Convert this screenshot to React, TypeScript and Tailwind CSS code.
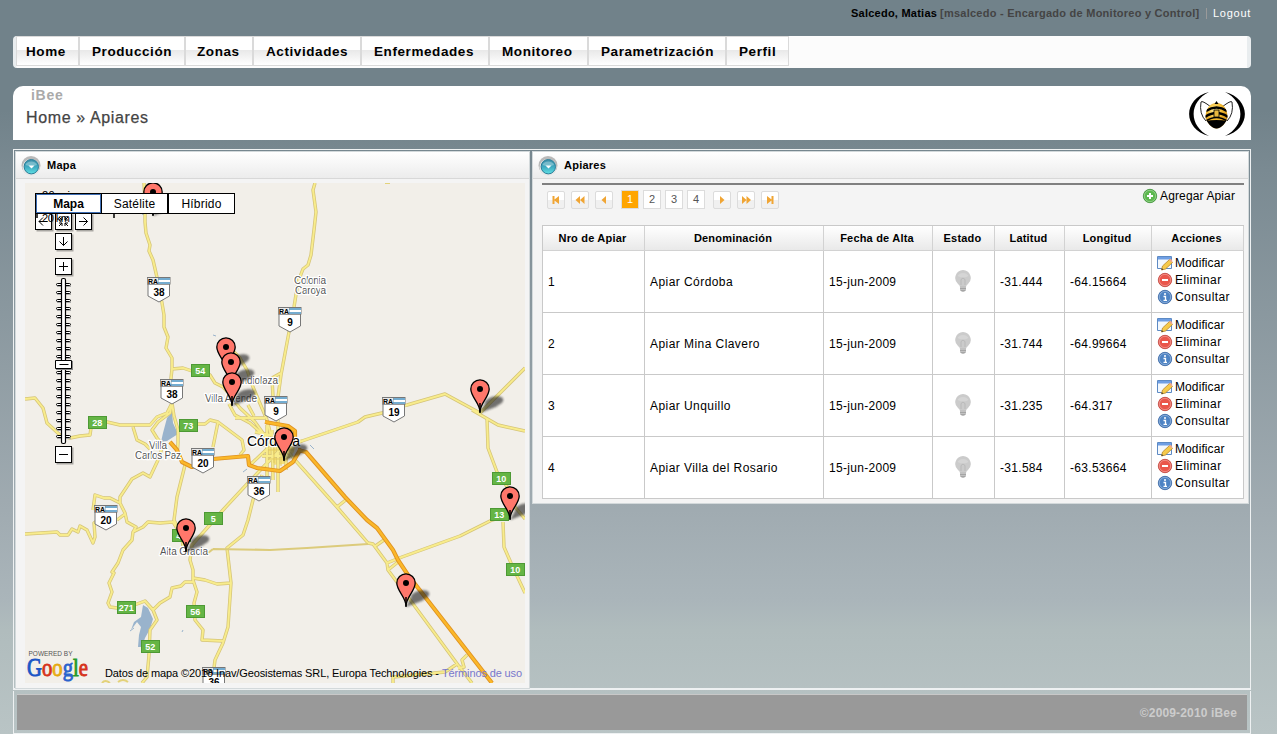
import React from "react";

const NAV: [string, string][] = [
  ["Home", "w-[63px] pl-[9px]"],
  ["Producción", "w-[106px] pl-[12px]"],
  ["Zonas", "w-[68px] pl-[11px]"],
  ["Actividades", "w-[108px] pl-[12px]"],
  ["Enfermedades", "w-[128px] pl-[12px]"],
  ["Monitoreo", "w-[99px] pl-[12px]"],
  ["Parametrización", "w-[138px] pl-[12px]"],
  ["Perfil", "w-[63px] pl-[12px]"],
];

const ROWS = [
  ["1", "Apiar Córdoba", "15-jun-2009", "-31.444", "-64.15664"],
  ["2", "Apiar Mina Clavero", "15-jun-2009", "-31.744", "-64.99664"],
  ["3", "Apiar Unquillo", "15-jun-2009", "-31.235", "-64.317"],
  ["4", "Apiar Villa del Rosario", "15-jun-2009", "-31.584", "-63.53664"],
];

const HEADERS = ["Nro de Apiar", "Denominación", "Fecha de Alta", "Estado", "Latitud", "Longitud", "Acciones"];

const ROADS = [
  "M144 183L145 205L145 222L146 233L150 245L149 251L153 260L156 273L159 287L162 303L164 315L164 327L168 337L166 348L172 358L172 369L171 378L172 403L170 413L158 422L152 430L157 438L163 445L158 460L150 477L143 473L132 479L120 497L120 503",
  "M172 369L183 368L192 371L210 375L215 383L223 387L230 395L240 408L255 422L268 440",
  "M232 350L240 358L247 370L253 387L267 420L272 440",
  "M315 183L313 190L316 212L314 230L311 255L308 265L303 269L298 282L294 307L289 332L281 375L278 397L276 420",
  "M281 373L272 378L273 397",
  "M295 443L302 441L358 422L365 417L382 413L407 405L445 394L480 413L525 368",
  "M472 410L498 425L525 431",
  "M487 418L488 448L497 472L508 488L515 507L525 519",
  "M510 515L492 520L460 536L402 557L387 563",
  "M503 522L504 547L511 563L525 593",
  "M285 448L295 460L337 507L368 543L373 544L387 563L388 570L408 597L458 665L472 683",
  "M337 507L347 499M374 547L384 540M388 570L398 562",
  "M457 664L445 672L393 677L393 683M467 655L462 660L464 667L458 668",
  "M280 450L270 460L248 483L223 510L192 545L190 560L193 570L193 580L197 592L194 603L195 620L203 630L202 640L223 641",
  "M262 475L253 500L248 520L243 535L227 548L231 583L228 627L223 643L215 660L214 668",
  "M193 578L205 580L217 584L231 583",
  "M193 582L185 582L181 586L172 588L170 597L160 603L153 610L157 620L150 630L149 655L147 677L142 683",
  "M153 610L145 601L137 604L126 608L117 608L110 607L108 603L112 592L109 583L114 573L112 572L118 563L123 550L132 540L133 532L143 527L148 522L160 523L173 522L182 537L183 548",
  "M93 510L95 495L104 498L110 498L120 503L125 513L127 522L136 527L133 532M125 514L117 520",
  "M25 534L57 532L60 535L68 535L72 529L78 532L80 526L87 530L93 543L95 537L94 523L104 515",
  "M185 465L177 497L174 520L180 532",
  "M25 399L35 398L43 408L47 423L60 435L70 438L80 436L90 435L91 428M97 424L107 422L120 425L150 425L157 417L167 413L172 403",
  "M133 427L137 440L145 444L150 449",
  "M172 403L174 416L178 430L178 443L177 458M188 426L198 424L205 424L210 420L218 422L242 440L244 450L240 455M218 422L213 447",
  "M229 404L235 415L250 423L267 438M235 418L265 418M248 405L254 416M250 465L268 448",
  "M267 425L267 490M272 430L273 480M278 420L278 492M286 425L286 470M255 432L295 440M258 445L295 445M262 456L290 456",
];

const HIGHWAYS = [
  "M170 442L177 450L182 462L192 467L213 459L248 456L249 465L257 468L280 471L293 462L300 450L298 450",
  "M265 422L288 426L295 431L295 442",
  "M298 450L306 452L345 497L367 520L377 528L393 550L398 560L408 575L492 683",
];

const SHIELDS: [number, number, string][] = [
  [147, 277, "38"], [160, 379, "38"], [278, 307, "9"], [264, 396, "9"], [382, 397, "19"],
  [191, 448, "20"], [247, 476, "36"], [94, 505, "20"], [202, 667, "36"],
];

const SIGNS: [number, number, string][] = [
  [200, 371, "54"], [97, 423, "28"], [188, 426, "73"], [213, 519, "5"], [181, 536, "45"], [126, 608, "271"],
  [195, 612, "56"], [150, 647, "52"], [501, 479, "10"], [499, 515, "13"], [515, 570, "10"],
];

const PINS: [number, number][] = [
  [153, 192], [226, 347], [231, 362], [232, 382], [480, 389], [284, 437], [186, 528], [510, 496], [406, 583],
];

function Label({ x, y, w, size = 10, fill = "#555", children }: { x: number; y: number; w: number; size?: number; fill?: string; children: string }) {
  return (
    <text x={x} y={y} textLength={w} fontSize={size} fill={fill} stroke="#fff" strokeWidth="2.5" strokeLinejoin="round" paintOrder="stroke">
      {children}
    </text>
  );
}

function MapButton({ x, y, d }: { x: number; y: number; d: string }) {
  return (
    <g transform={`translate(${x} ${y})`}>
      <rect x="1.5" y="1.5" width="17" height="17" fill="#000" opacity=".3" />
      <rect x=".5" y=".5" width="16" height="16" fill="#fff" stroke="#000" />
      <path d={d} fill="none" stroke="#000" />
    </g>
  );
}

function MapDrawing() {
  const roads = ROADS.join("");
  const highways = HIGHWAYS.join("");
  return (
    <svg viewBox="25 183 500 500" className="block h-[500px] w-[500px]" fontFamily="Liberation Sans, Arial, sans-serif">
      <defs>
        <filter id="soft" x="-30%" y="-30%" width="160%" height="160%"><feGaussianBlur stdDeviation="1.3" /></filter>
      </defs>
      <rect x="25" y="183" width="500" height="500" fill="#f2efe9" />
      <path d="M167 418L172 412L173 423L178 434L167 441L161 442L163 433Z" fill="#99b3cc" />
      <path d="M143 605L148 608L153 619L150 629L145 638L142 647L138 647L139 635L141 627L137 622L131 630L134 622L141 617Z" fill="#99b3cc" />
      <path d="M213 335l3 1M130 631l4-3M182 632l1-2M243 472l4-3M310 445l4 4M142 214l3 1" stroke="#99b3cc" fill="none" />
      <path d="M271 438L284 441L296 440L294 452L284 464L272 465L266 452Z" fill="#f6e27b" />
      <path d={roads} fill="none" stroke="#d5c478" strokeWidth="3.4" strokeLinejoin="round" />
      <path d={roads} fill="none" stroke="#f8ec8c" strokeWidth="1.9" strokeLinejoin="round" />
      <path d="M213 549L208 553M213 549L270 550L307 548L368 544" fill="none" stroke="#dccb7b" strokeWidth="2.2" />
      <path d="M274 441V463M281 441V466M289 441V458M268 450H294M268 459H288" stroke="#e4cb61" fill="none" />
      <path d={highways} fill="none" stroke="#df9222" strokeWidth="4.2" strokeLinejoin="round" />
      <path d={highways} fill="none" stroke="#fbb829" strokeWidth="2.4" strokeLinejoin="round" />
      <path d="M102 683q3-4 8 0M118 682q5-4 10 0M385 183h5" fill="none" stroke="#e3d27a" strokeWidth="2" />

      <Label x={294} y={284} w={32}>Colonia</Label>
      <Label x={295} y={294} w={31}>Caroya</Label>
      <Label x={228} y={384} w={50}>Mendiolaza</Label>
      <Label x={205} y={402} w={52}>Villa Allende</Label>
      <Label x={149} y={449} w={18}>Villa</Label>
      <Label x={135} y={459} w={46}>Carlos Paz</Label>
      <Label x={160} y={555} w={48}>Alta Gracia</Label>
      <Label x={247} y={446} w={53} size={14} fill="#000">Córdoba</Label>

      {SHIELDS.map(([x, y, n], i) => (
        <g key={i} transform={`translate(${x} ${y})`}>
          <path d="M1 7H22.5V19L12 25L1 19Z" fill="#fff" stroke="#777" />
          <rect x="0" y="0" width="23.5" height="7.5" fill="#777" />
          <rect x=".8" y="1" width="10.4" height="6" fill="#e8e8e8" />
          <rect x="11.5" y="1" width="11.5" height="6" fill="#74acd0" />
          <rect x="11.5" y="3" width="11.5" height="2" fill="#fff" />
          <text x="1" y="6.6" fontSize="7" fontWeight="bold" textLength="10" lengthAdjust="spacingAndGlyphs">RA</text>
          <text x="12" y="18.6" fontSize="10" fontWeight="bold" textAnchor="middle">{n}</text>
        </g>
      ))}
      {SIGNS.map(([x, y, n], i) => (
        <g key={i}>
          <rect x={x - 8.5} y={y - 6.5} width="18" height="12" fill="#65b545" stroke="#4d9934" />
          <text x={x + 0.3} y={y + 3} fontSize="9" fontWeight="bold" fill="#fff" textAnchor="middle">{n}</text>
        </g>
      ))}
      {PINS.map(([x, y], i) => (
        <g key={i} transform={`translate(${x} ${y + 24})`} fill="#222" opacity=".62" filter="url(#soft)">
          <path d="M0 0L6 -11L18 -7Z" />
          <ellipse cx="14" cy="-11.500" rx="9.500" ry="4.800" transform="rotate(-14 14 -11.5)" />
        </g>
      ))}
      {PINS.map(([x, y], i) => (
        <g key={i} transform={`translate(${x} ${y})`}>
          <path d="M0 23C0 14 -9.2 8 -9.2 0A9.2 9.2 0 1 1 9.2 0C9.2 8 0 14 0 23Z" fill="#ff776b" stroke="#000" strokeWidth="1.3" />
          <path d="M0 14V24" stroke="#000" strokeWidth="1.5" />
          <circle r="3" fill="#000" />
        </g>
      ))}

      <text x="42" y="199" fontSize="11" textLength="28">20 mi</text>
      <MapButton x={35} y={213} d="M12.5 8.500H4M8 4.500L4 8.500L8 12.500" />
      <MapButton x={55} y={213} d="M4 4l3 3m0-3v3h-3M13 4l-3 3m0-3v3h3M4 13l3-3m0 3v-3h-3M13 13l-3-3m0 3v-3h3" />
      <MapButton x={75} y={213} d="M4 8.500H12.500M8.500 4.500L12.500 8.500L8.500 12.500" />
      <MapButton x={55} y={233} d="M8.500 4V12.500M4.500 8.500L8.500 12.500L12.500 8.500" />
      <MapButton x={55} y={258} d="M4 8.500H13M8.500 4V13" />
      <MapButton x={55} y={446} d="M4 8.500H13" />
      <text x="42" y="222" fontSize="11" textLength="28">20 km</text>
      <path d="M37 212v6M114 212v6" stroke="#000" strokeWidth="1.5" />
      {Array.from({ length: 20 }, (_, i) => (
        <g key={i}>
          <path d={`M57 ${286.5 + i * 8}h14`} stroke="#aaa" />
          <rect x="56.500" y={283.5 + i * 8} width="14" height="2" rx="1" fill="#fff" stroke="#000" />
        </g>
      ))}
      <rect x="61.500" y="278.500" width="4" height="165" rx="1.500" fill="#fff" stroke="#000" strokeWidth="1.200" />
      <rect x="56" y="361" width="17" height="9" fill="#888" />
      <path d="M55.500 360.500h16v8h-16zM59.500 364.500h9" fill="#fff" stroke="#000" />

      <text x="28.500" y="656" fontSize="7" fill="#555" textLength="44" lengthAdjust="spacingAndGlyphs">POWERED BY</text>
      <g fontFamily="Liberation Serif, serif" fontSize="25" strokeWidth=".9">
        <text x="27" y="676" textLength="61" lengthAdjust="spacingAndGlyphs">
          <tspan fill="#1c56c6" stroke="#1c56c6">G</tspan><tspan fill="#d6331c" stroke="#d6331c">o</tspan><tspan fill="#f0b51b" stroke="#e3a60c">o</tspan><tspan fill="#2a62cd" stroke="#2a62cd">g</tspan><tspan fill="#269a2a" stroke="#269a2a">l</tspan><tspan fill="#d6331c" stroke="#d6331c">e</tspan>
        </text>
      </g>
      <text x="105" y="677" fontSize="11" textLength="334">Datos de mapa ©2010 Inav/Geosistemas SRL, Europa Technologies -</text>
      <text x="442" y="677" fontSize="11" fill="#7777cc" textLength="80">Términos de uso</text>
    </svg>
  );
}

function MapPanelTabs() {
  return (
    <div className="absolute top-[10px] left-[10px] flex h-[21px] w-[200px] border border-black bg-white text-center text-[12px] leading-[20px]">
      <div className="w-[65px] border border-[#3f6fb5] leading-[18px] font-bold">Mapa</div>
      <div className="w-[68px] border-r-2 border-l border-black tracking-[0.2px]">Satélite</div>
      <div className="w-[65px] tracking-[0.2px]">Híbrido</div>
    </div>
  );
}

function PanelHeader({ title }: { title: string }) {
  return (
    <div className="flex h-[27px] shrink-0 items-center border-b border-[#d8d8d8] bg-linear-to-b from-white to-[#ececec] pl-[5px] text-[11px] font-bold tracking-[0.25px]">
      <svg viewBox="0 0 20 20" className="mt-[2px] mr-[6px] h-5 w-5">
        <defs>
          <linearGradient id="aqua" x1="0" y1="0" x2="0" y2="1">
            <stop offset="0" stopColor="#3d8fa8" />
            <stop offset=".5" stopColor="#3fa9c0" />
            <stop offset="1" stopColor="#5fe0e4" />
          </linearGradient>
        </defs>
        <circle cx="10" cy="9.500" r="9.500" fill="#b9b9b9" />
        <circle cx="10" cy="11.500" r="8.500" fill="#e8e8e8" />
        <circle cx="10.300" cy="10.700" r="7.200" fill="url(#aqua)" stroke="#2a7d98" />
        <path d="M4.500 9a6 5 0 0 1 11.500 0q-6 2-11.500 0" fill="#fff" opacity=".3" />
        <path d="M7.500 9.500h6L10.500 12.500z" fill="#fff" />
      </svg>
      <span>{title}</span>
    </div>
  );
}

const ARROWS: Record<string, string> = {
  first: "M5.500 5h2v3.500l4.500-3.500v8l-4.500-3.500v3.500h-2z",
  rewind: "M9 5v8L4.500 9zM13.500 5v8L9 9z",
  prev: "M11 5v8L6.500 9z",
  next: "M7 5v8l4.500-4z",
  forward: "M5 5v8l4.500-4zM9.500 5v8l4.500-4z",
  last: "M12.500 5h-2v3.500L6 5v8l4.500-3.500v3.500h2z",
};

function PagerArrow({ kind }: { kind: string }) {
  return (
    <div className="h-[18px] w-[18px] rounded-[2px] border border-[#dcdcdc] bg-linear-to-b from-white from-50% to-[#f0f0f0] to-50%">
      <svg viewBox="1 1 16 16" className="block h-4 w-4">
        <path d={ARROWS[kind]} fill="#f0a534" />
      </svg>
    </div>
  );
}

function PagerNumber({ n, active }: { n: string; active?: boolean }) {
  return (
    <div className={`h-[19px] w-[18px] border border-[#dcdcdc] text-center text-[11px] leading-[17px] ${active ? "bg-[#ffa500] text-white" : "bg-white text-[#555]"}`}>
      {n}
    </div>
  );
}

function Bulb() {
  return (
    <svg viewBox="0 0 16 22" className="mr-[2px] mb-[2px] h-[22px] w-4">
      <path d="M8 0a8 8 0 0 0-5 14q2 1.500 2 3h6q0-1.500 2-3a8 8 0 0 0-5-14" fill="#cbcbcb" />
      <path d="M6 15V9.500q2-3 4 0V15" fill="none" stroke="#b9b9b9" />
      <path d="M2.500 6a6 5 0 0 1 11 0q-5 3-11 0" fill="#fff" opacity=".2" />
      <path d="M5 16h6v4l-2 2H7l-2-2z" fill="#c2c2c2" />
      <path d="M5 18.500h6M5.500 20.500h5" stroke="#989898" strokeWidth=".7" />
    </svg>
  );
}

function EditIcon() {
  return (
    <svg viewBox="0 0 16 16" className="h-4 w-4">
      <path d="M.5 1.500h14v12H.5z" fill="#f3f8fd" stroke="#5d8ac4" />
      <path d="M1 2h13v2.500H1z" fill="#6f9fe4" />
      <path d="M4.500 15l1-4 7-6.500 3 3-7 6.500z" fill="#f6ca4a" stroke="#b8852a" strokeWidth=".8" />
      <path d="M12 5l1-1q2-.5 2.500 2.500l-1 1z" fill="#eda78c" />
      <path d="M4.500 15l.4-1.800 1.500 1.300z" fill="#333" />
    </svg>
  );
}

function RoundIcon({ kind }: { kind: "add" | "remove" | "info" }) {
  const fill = kind === "add" ? "#5cb84e" : kind === "remove" ? "#ea564b" : "#4d83c4";
  const edge = kind === "add" ? "#3b8f35" : kind === "remove" ? "#bd3d36" : "#315f9f";
  return (
    <svg viewBox="0 0 16 16" className="h-4 w-4">
      <circle cx="8" cy="8" r="6.700" fill={fill} stroke={edge} strokeWidth=".8" />
      <circle cx="8" cy="8" r="5.700" fill="none" stroke="#fff" opacity=".4" strokeWidth=".8" />
      {kind === "add" && <path d="M8 5v6M5 8h6" stroke="#fff" strokeWidth="2" />}
      {kind === "remove" && <path d="M5 8h6" stroke="#fff" strokeWidth="2" />}
      {kind === "info" && <path d="M7 5h2M6.500 7.500h2v3.500M6.500 11.300h3.500" fill="none" stroke="#fff" strokeWidth="1.300" />}
    </svg>
  );
}

function BeeLogo() {
  return (
    <svg viewBox="0 0 56 44" className="h-11 w-14">
      <defs>
        <radialGradient id="bee" cx=".4" cy=".3" r=".7">
          <stop offset="0" stopColor="#fff0a0" />
          <stop offset=".45" stopColor="#f2b92f" />
          <stop offset="1" stopColor="#b9780c" />
        </radialGradient>
        <clipPath id="beeBody"><path d="M27.500 11C20 11 16.500 18 16.500 25C17 30 23 36.500 27.500 36.500C32 36.500 38 30 38.500 25C38.500 18 35 11 27.500 11Z" /></clipPath>
      </defs>
      <path d="M20 0C-6.500 7 -6.500 37 20 44C-.5 34 -.5 10 20 0ZM36 0C56.500 10 56.500 34 36 44C62.500 37 62.500 7 36 0Z" fill="#000" />
      <path d="M22 15Q13 8 12 10Q10 22 17 29M33 15Q42 8 43 10Q45 22 38 29" fill="none" stroke="#222" strokeWidth="1" />
      <g clipPath="url(#beeBody)">
        <rect x="16" y="10" width="24" height="28" fill="url(#bee)" />
        <path d="M17 19Q27.500 12 38 19M16 25Q27.500 17 39 25" fill="none" stroke="#000" strokeWidth="2.400" />
        <path d="M16 29.500Q27.500 21.500 39 29.500" fill="none" stroke="#000" strokeWidth="1.600" />
        <path d="M16 29Q27.500 27 39 29V38H16Z" fill="#000" />
        <path d="M25 18h5v7h-5z" fill="#e9b83e" stroke="#000" strokeWidth=".8" />
      </g>
      <path d="M25.500 12l2-3 2 3z" fill="#000" />
    </svg>
  );
}

const CELL = "flex items-center border-r border-b border-[#c9c9c9] pl-[5px]";

export default function App() {
  return (
    <div className="h-[734px] w-[1277px] overflow-hidden bg-[linear-gradient(to_bottom,#71828a_0px,#71828a_110px,#7a8a92_170px,#a0abb1_510px,#aab5ba_600px,#b0bcbd_630px,#b9c4c5_734px)] pl-[13px] font-['Liberation_Sans',Arial,sans-serif] text-[12px] text-black">
      <div className="w-[1238px]">
        <div className="flex h-9 justify-end pt-[5px] text-[11px] leading-[16px]">
          <span className="w-[89px] font-bold tracking-[0.24px] whitespace-nowrap">Salcedo, Matias</span>
          <span className="w-[266px] font-bold tracking-[0.25px] whitespace-nowrap text-[#444]">[msalcedo - Encargado de Monitoreo y Control]</span>
          <span className="mt-[3px] mr-[6px] h-[11px] w-px bg-[#9a9a9a]" />
          <span className="w-[38px] tracking-[0.75px] whitespace-nowrap text-white">Logout</span>
        </div>

        <nav className="flex h-8 rounded-[4px] border-r-[4px] border-l-[3px] border-[#e9edef] bg-[#fcfcfc] text-[13.5px] font-bold tracking-[0.58px]">
          {NAV.map(([name, cls]) => (
            <div key={name} className={`${cls} h-[30px] shrink-0 border border-[#dadada] bg-linear-to-b from-white from-48% via-[#e9e9e9] via-48% to-white leading-[29px] whitespace-nowrap`}>
              {name}
            </div>
          ))}
        </nav>

        <header className="mt-[18px] flex h-[54px] justify-between rounded-t-[10px] bg-white pr-[6px]">
          <div className="pl-[13px]">
            <div className="pt-px pl-[5px] text-[14px] leading-[17px] font-bold tracking-[0.7px] text-[#aaa]">iBee</div>
            <div className="text-[16px] leading-[27px] tracking-[0.62px] text-[#444] [-webkit-text-stroke:0.25px_#444]">Home » Apiares</div>
          </div>
          <div className="pt-[6px]"><BeeLogo /></div>
        </header>

        <main className="mt-[9px] flex h-[541px] items-start gap-[2px] border border-b-2 border-[#eef1f2] pt-px pl-px">
          <section className="h-[538px] w-[515px] border border-[#d3d9db] bg-[#f4f4f4]">
            <PanelHeader title="Mapa" />
            <div className="relative mt-[4px] ml-[9px] h-[500px] w-[500px]">
              <MapDrawing />
              <MapPanelTabs />
            </div>
          </section>
          <section className="h-[353px] w-[717px] border border-[#d3d9db] bg-[#f4f4f4]">
            <PanelHeader title="Apiares" />
            <div className="mt-[4px] ml-[9px] w-[702px]">
              <div className="h-[2px] bg-[#808080]" />
              <div className="flex h-[40px] pt-[5px] pl-[5px]">
                <div className="flex gap-[6px] pt-px">
                  <PagerArrow kind="first" />
                  <PagerArrow kind="rewind" />
                  <PagerArrow kind="prev" />
                </div>
                <div className="mx-[8px] flex gap-[4px]">
                  <PagerNumber n="1" active />
                  <PagerNumber n="2" />
                  <PagerNumber n="3" />
                  <PagerNumber n="4" />
                </div>
                <div className="flex gap-[6px] pt-px">
                  <PagerArrow kind="next" />
                  <PagerArrow kind="forward" />
                  <PagerArrow kind="last" />
                </div>
                <div className="-mt-[2px] mr-[9px] ml-auto flex h-4 items-center gap-[2px]">
                  <RoundIcon kind="add" />
                  <span className="tracking-[0.12px]">Agregar Apiar</span>
                </div>
              </div>
              <div className="grid grid-cols-[102px_179px_109px_62px_70px_87px_92px] grid-rows-[25px_repeat(4,62px)] border-t border-l border-[#c9c9c9] bg-white">
                {HEADERS.map((h) => (
                  <div key={h} className="border-r border-b border-[#d2d2d2] bg-linear-to-b from-white to-[#e9e9e9] pr-[2px] text-center text-[11px] leading-[25px] font-bold tracking-[0.2px]">
                    {h}
                  </div>
                ))}
                {ROWS.map(([id, name, date, lat, lng]) => (
                  <React.Fragment key={id}>
                    <div className={CELL}>{id}</div>
                    <div className={`${CELL} pt-px tracking-[0.44px]`}>{name}</div>
                    <div className={`${CELL} pt-px tracking-[0.3px]`}>{date}</div>
                    <div className="flex items-center justify-center border-r border-b border-[#c9c9c9]"><Bulb /></div>
                    <div className={`${CELL} pt-px tracking-[0.3px]`}>{lat}</div>
                    <div className={`${CELL} pt-px tracking-[0.3px]`}>{lng}</div>
                    <div className={`${CELL} pb-[3px]`}>
                      <div>
                        <div className="flex h-[17px] items-center gap-[2px]"><EditIcon /><span className="tracking-[0.1px]">Modificar</span></div>
                        <div className="flex h-[17px] items-center gap-[2px]"><RoundIcon kind="remove" /><span className="tracking-[0.4px]">Eliminar</span></div>
                        <div className="flex h-[17px] items-center gap-[2px]"><RoundIcon kind="info" /><span className="tracking-[0.4px]">Consultar</span></div>
                      </div>
                    </div>
                  </React.Fragment>
                ))}
              </div>
            </div>
          </section>
        </main>

        <footer className="mt-px h-[43px] border border-t-0 border-[#eef1f2] px-[3px] pt-[3px]">
          <div className="h-[36px] border-t border-[#c8c8c8] bg-[#999] pr-[10px] text-right text-[12px] leading-[36px] font-bold tracking-[0.15px] text-[#ccc]">
            ©2009-2010 iBee
          </div>
        </footer>
      </div>
    </div>
  );
}
